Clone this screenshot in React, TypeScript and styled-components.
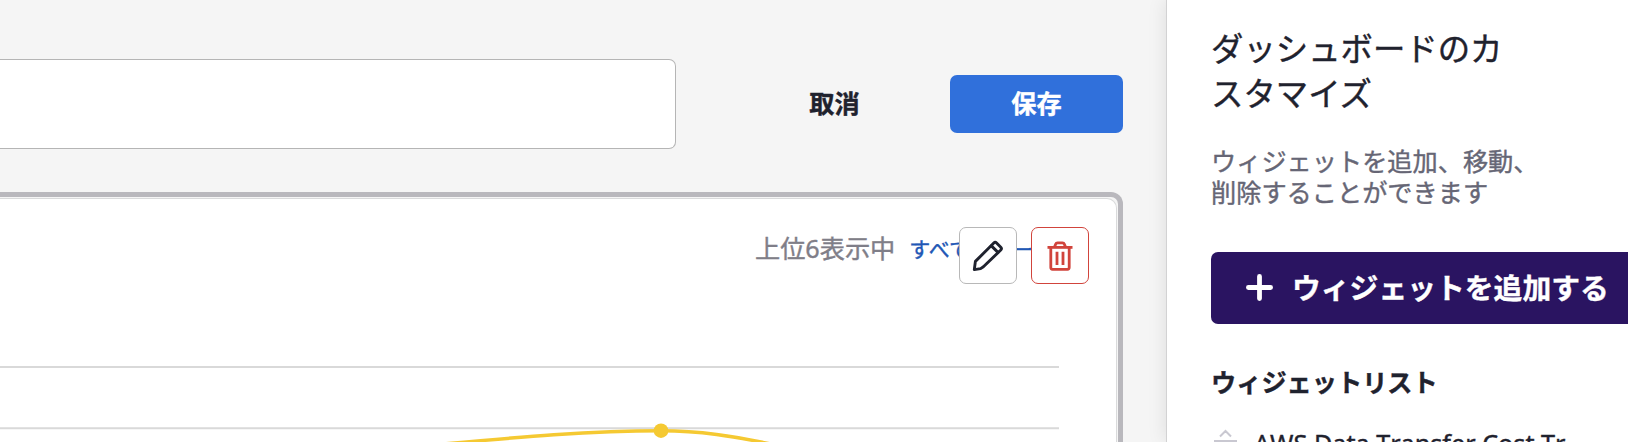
import React from 'react';
import styled, { createGlobalStyle } from 'styled-components';

const GlobalStyle = createGlobalStyle`
  * { box-sizing: border-box; }
  html, body { margin: 0; height: 442px; overflow: hidden; background: #f5f5f5; }
  body, button, input {
    font-family: "Noto Sans", "Noto Sans CJK JP", sans-serif;
    -webkit-text-stroke: 0.4px currentColor;
  }
  h1, h2, p, ul { margin: 0; padding: 0; }
`;

const Page = styled.div`
  display: flex;
  width: 1628px;
  height: 442px;
  overflow: hidden;
  color: #1f222e;
`;

const Main = styled.main`
  width: 1166px;
  flex: none;
  display: flex;
  flex-direction: column;
`;

const Toolbar = styled.header`
  display: flex;
  align-items: center;
  height: 90px;
  margin-top: 59px;
`;

const NameInput = styled.input`
  width: 676px;
  height: 90px;
  border: 1px solid #b5b5b5;
  border-left: 0;
  border-radius: 0 7px 7px 0;
  background: #fff;
  outline: none;
`;

const Button = styled.button<{ $primary?: boolean }>`
  width: ${(p) => (p.$primary ? 173 : 225)}px;
  margin-left: ${(p) => (p.$primary ? 3 : 46)}px;
  height: 58px;
  padding: 0 0 2px;
  border: 0;
  border-radius: 7px;
  font-size: 25.2px;
  line-height: 36px;
  font-weight: 700;
  color: ${(p) => (p.$primary ? '#fff' : '#1f222e')};
  background: ${(p) => (p.$primary ? '#3070db' : 'transparent')};
`;

const WidgetFrame = styled.section`
  width: 1123px;
  height: 300px;
  flex: none;
  margin-top: 43px;
  padding: 1px 1px 0 0;
  border: 5px solid #b9b8bd;
  border-left: 0;
  border-radius: 0 12px 0 0;
`;

const WidgetCard = styled.div`
  height: 100%;
  border: 1px solid #d9dadb;
  border-left: 0;
  border-radius: 0 10px 0 0;
  background: #fff;
`;

const WidgetHeader = styled.div`
  display: flex;
  justify-content: flex-end;
  position: relative;
  height: 128px;
  padding: 31px 62px 0 0;
`;

const Count = styled.span`
  font-size: 25.2px;
  line-height: 36px;
  color: #7f7e88;
  margin-right: 14px;
  white-space: nowrap;
`;

const AllLink = styled.a`
  font-size: 21px;
  line-height: 38px;
  color: #2157b5;
  white-space: nowrap;
`;

const Actions = styled.div`
  position: absolute;
  top: 28px;
  right: 27px;
  display: flex;
  gap: 14px;
`;

const IconButton = styled.button<{ $danger?: boolean }>`
  display: flex;
  align-items: center;
  justify-content: center;
  width: 58px;
  height: 57px;
  padding: 0;
  border: 1px solid ${(p) => (p.$danger ? '#d1443c' : '#b8b8b8')};
  border-radius: 7px;
  background: #fff;
  color: ${(p) => (p.$danger ? '#d1443c' : '#1f222e')};
`;

const Chart = styled.svg`
  display: block;
`;

const Sidebar = styled.aside`
  position: relative;
  flex: 1;
  min-width: 0;
  padding: 26px 0 0 44px;
  border-left: 1px solid #d2d2d3;
  background: #fff;
  box-shadow: 0 0 18px rgba(0, 0, 0, 0.1);
`;

const Title = styled.h1`
  width: 300px;
  font-size: 32.4px;
  line-height: 45px;
  font-weight: 400;
`;

const Description = styled.p`
  margin-top: 30px;
  font-size: 25.2px;
  line-height: 31px;
  color: #666675;
  white-space: nowrap;
`;

const AddButton = styled.button`
  display: flex;
  align-items: center;
  width: 450px;
  height: 72px;
  margin-top: 44px;
  padding: 0 0 1px 35px;
  border: 0;
  border-radius: 7px;
  background: #2a1461;
  color: #fff;
  font-size: 28.8px;
  line-height: 40px;
  font-weight: 700;
  white-space: nowrap;
  gap: 19px;
`;

const ListTitle = styled.h2`
  margin-top: 40px;
  font-size: 25.2px;
  line-height: 36px;
  font-weight: 700;
`;

const WidgetItem = styled.div`
  display: flex;
  align-items: flex-start;
  gap: 17px;
  margin-top: 25px;
  padding-left: 3px;
  font-size: 25.2px;
  font-kerning: none;
  line-height: 36px;
  white-space: nowrap;
`;

const Handle = styled.svg`
  margin-top: 4px;
`;

const PencilIcon = () => (
  <svg width="32" height="32" viewBox="0 0 32 32" fill="none" stroke="currentColor" strokeWidth="2.9" strokeLinejoin="round" strokeLinecap="round">
    <path d="M2.3 29.6 3.4 21.4 21.8 3Q23.2 1.6 24.6 3L28.8 7.2Q30.1 8.6 28.8 10L11.4 26.8 8.6 28.6Z" />
    <path d="M19.4 5.9 26 12.4" />
  </svg>
);

const TrashIcon = () => (
  <svg width="26" height="30" viewBox="0 0 26 30" fill="none" stroke="currentColor" strokeWidth="2.8" strokeLinejoin="round">
    <path d="M0.5 6.4H25.5" />
    <path d="M7.5 6 8.6 3.2Q9.1 1.9 10.5 1.9H15.5Q16.9 1.9 17.4 3.2L18.5 6" />
    <path d="M3.8 6V26.6Q3.8 28.3 5.5 28.3H20.5Q22.2 28.3 22.2 26.6V6" />
    <path d="M10 10.7V24M16 10.7V24" />
  </svg>
);

const PlusIcon = () => (
  <svg width="27" height="27" viewBox="0 0 27 27" fill="none" stroke="currentColor" strokeWidth="4.8" strokeLinecap="round">
    <path d="M13.5 2.4V24.6M2.4 13.5H24.6" />
  </svg>
);

export default function App() {
  return (
    <>
      <GlobalStyle />
      <Page>
        <Main>
          <Toolbar>
            <NameInput />
            <Button>取消</Button>
            <Button $primary>保存</Button>
          </Toolbar>
          <WidgetFrame>
            <WidgetCard>
              <WidgetHeader>
                <Count>上位6表示中</Count>
                <AllLink>すべてのデータ</AllLink>
                <Actions>
                  <IconButton><PencilIcon /></IconButton>
                  <IconButton $danger><TrashIcon /></IconButton>
                </Actions>
              </WidgetHeader>
              <Chart width="1116" height="115" viewBox="0 327 1116 115" fill="none">
                <path d="M0 367H1059M0 428.3H1059" stroke="#d9d9d9" strokeWidth="2" />
                <path d="M440 444.3C520 437 590 430.7 661 430.7C700 430.7 733 436 773 444.5" stroke="#f5c932" strokeWidth="3.5" />
                <circle cx="661" cy="430.7" r="7.3" fill="#f5c932" />
              </Chart>
            </WidgetCard>
          </WidgetFrame>
        </Main>
        <Sidebar>
          <Title>ダッシュボードのカスタマイズ</Title>
          <Description>ウィジェットを追加、移動、<br />削除することができます</Description>
          <AddButton><PlusIcon />ウィジェットを追加する</AddButton>
          <ListTitle>ウィジェットリスト</ListTitle>
          <WidgetItem>
            <Handle width="23" height="30" viewBox="0 0 23 30" fill="none" stroke="#c9c8d1" strokeWidth="2">
              <path d="M6 7.5 11.5 2 17 7.5M0 12H23M0 18H23M6 22.5 11.5 28 17 22.5" />
            </Handle>
            <span>AWS Data Transfer Cost Tr…</span>
          </WidgetItem>
        </Sidebar>
      </Page>
    </>
  );
}
